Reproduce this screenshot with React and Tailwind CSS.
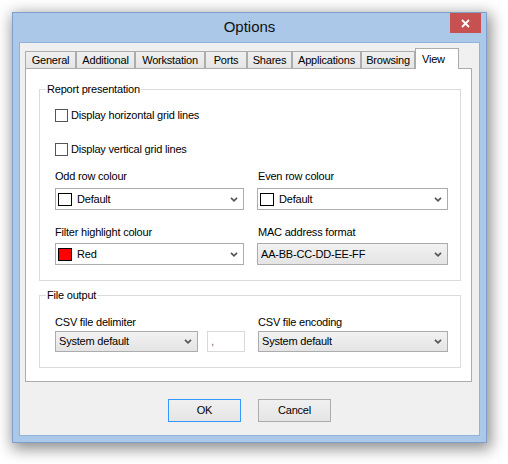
import React from "react";

// Windows 8 style "Options" dialog, View tab selected
const TABS = [
  { name: "General", cls: "w-[51px]" },
  { name: "Additional", cls: "w-[59px]" },
  { name: "Workstation", cls: "w-[70px]" },
  { name: "Ports", cls: "w-[42px]" },
  { name: "Shares", cls: "w-[45px]" },
  { name: "Applications", cls: "w-[69px]" },
  { name: "Browsing", cls: "w-[54px]" },
];

const Chevron = () => (
  <svg width="8" height="5" viewBox="0 0 8 5" className="shrink-0">
    <path d="M1 0.8 L4 3.8 L7 0.8" fill="none" stroke="#555" strokeWidth="1.7" />
  </svg>
);

const Combo = ({ children, flat = false, className = "", h = "h-[22px]" }) => (
  <div
    className={`${className} ${h} border border-[#acacac] flex items-center pr-[5px] ${
      flat ? "bg-white pl-[2px]" : "bg-gradient-to-b from-[#f2f2f2] to-[#e4e4e4] pl-[3px]"
    }`}
  >
    <div className="flex-1 flex items-center gap-[5px] text-black">{children}</div>
    <Chevron />
  </div>
);

const Swatch = ({ color }) => (
  <span className={`w-[14px] h-[13px] border border-black ${color}`} />
);

const Checkbox = ({ label, className = "" }) => (
  <div className={`${className} flex items-center h-[13px] gap-[3px]`}>
    <span className="w-[13px] h-[13px] border border-[#555] bg-white" />
    <span>{label}</span>
  </div>
);

const Group = ({ title, children, className = "" }) => (
  <fieldset className={`${className} w-[422px] border border-[#dcdcdc] pb-[15px]`}>
    <legend className="ml-[6px] px-[1px] leading-[14px]">{title}</legend>
    <div className="pl-[15px] pr-[12px]">{children}</div>
  </fieldset>
);

export default function App() {
  return (
    <div className="w-[508px] h-[464px] bg-white p-[12px] font-['Liberation_Sans',Arial,sans-serif] text-[11px] tracking-[-0.2px] text-black">
      <div className="w-[475px] h-[431px] border border-[#7f9fc8] bg-[#abc8e9] shadow-[2px_4px_14px_2px_rgba(0,0,0,0.45)] flex flex-col">
        {/* title bar */}
        <div className="relative h-[29px] flex items-center justify-center shrink-0">
          <span className="text-[15px] tracking-normal text-[#111]">Options</span>
          <div className="absolute right-[5px] top-0 w-[31px] h-[20px] bg-[#c75050] flex items-center justify-center">
            <svg width="9" height="9" viewBox="0 0 9 9">
              <path d="M1 1 L8 8 M8 1 L1 8" stroke="#fff" strokeWidth="1.8" />
            </svg>
          </div>
        </div>

        {/* client area */}
        <div className="flex-1 mx-[6px] mb-[6px] border border-[#93b2d9] bg-[#f0f0f0] flex flex-col">
          <div className="ml-[5px] mt-[5px]">
            {/* tabs */}
            <div className="flex items-end h-[20px]">
              {TABS.map((t) => (
                <div
                  key={t.name}
                  className={`${t.cls} h-[17px] border-t border-l border-r border-[#acacac] bg-gradient-to-b from-[#f0f0f0] to-[#e5e5e5] flex items-center justify-center`}
                >
                  {t.name}
                </div>
              ))}
              <div className="w-[44px] h-[21px] -mb-px relative z-10 border-t border-l border-r border-[#acacac] bg-white flex justify-start pl-[6px] pt-[2px]">
                View
              </div>
            </div>

            {/* tab panel */}
            <div className="w-[447px] h-[314px] border border-[#acacac] bg-white pl-[13px] pt-[13px]">
              <Group title="Report presentation">
                <Checkbox className="mt-[13px]" label="Display horizontal grid lines" />
                <Checkbox className="mt-[21px]" label="Display vertical grid lines" />

                <div className="grid grid-cols-[189px_191px] gap-x-[13px]">
                  <div className="mt-[14px] h-[13px] leading-[13px]">Odd row colour</div>
                  <div className="mt-[14px] h-[13px] leading-[13px] pl-[1px]">Even row colour</div>
                  <Combo flat className="mt-[5px]">
                    <Swatch color="bg-white" />
                    <span>Default</span>
                  </Combo>
                  <Combo flat className="mt-[5px]">
                    <Swatch color="bg-white" />
                    <span>Default</span>
                  </Combo>
                  <div className="mt-[16px] h-[13px] leading-[13px]">Filter highlight colour</div>
                  <div className="mt-[16px] h-[13px] leading-[13px] pl-[1px]">MAC address format</div>
                  <Combo flat className="mt-[4px]">
                    <Swatch color="bg-[#ff0000]" />
                    <span>Red</span>
                  </Combo>
                  <Combo className="mt-[4px]">
                    <span>AA-BB-CC-DD-EE-FF</span>
                  </Combo>
                </div>
              </Group>

              <Group title="File output" className="mt-[7px]">
                <div className="flex mt-[14px] h-[13px] leading-[13px]">
                  <div className="w-[203px]">CSV file delimiter</div>
                  <div>CSV file encoding</div>
                </div>
                <div className="flex mt-[2px]">
                  <Combo className="w-[143px]" h="h-[21px]">
                    <span>System default</span>
                  </Combo>
                  <div className="ml-[9px] w-[38px] h-[21px] border border-[#d9d9d9] bg-white pl-[3px] flex items-center text-[#6d6d6d]">
                    ,
                  </div>
                  <Combo className="ml-[13px] w-[190px]" h="h-[21px]">
                    <span>System default</span>
                  </Combo>
                </div>
              </Group>
            </div>
          </div>

          {/* buttons */}
          <div className="mt-[17px] flex justify-center gap-[17px]">
            <button className="w-[73px] h-[23px] border border-[#3399ff] bg-gradient-to-b from-[#f0f0f0] to-[#e5e5e5] text-black">
              OK
            </button>
            <button className="w-[73px] h-[23px] border border-[#acacac] bg-gradient-to-b from-[#f0f0f0] to-[#e5e5e5] text-black">
              Cancel
            </button>
          </div>
        </div>
      </div>
    </div>
  );
}
